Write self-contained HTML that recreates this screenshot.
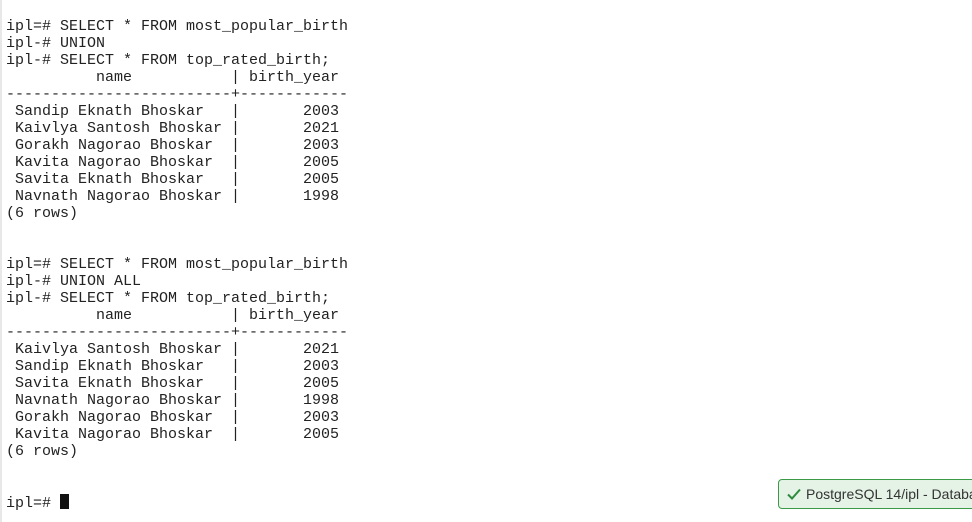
<!DOCTYPE html>
<html><head><style>
body{margin:0;width:972px;height:522px;background:#fff;position:relative;overflow:hidden}
pre{position:absolute;left:6px;top:18px;margin:0;font-family:"Liberation Mono",monospace;font-size:15px;line-height:17px;color:#222;letter-spacing:0}
.lb{position:absolute;left:0;top:0;width:2px;height:522px;background:#e8e8e8}
.cur{display:inline-block;width:9px;height:15px;background:#111;vertical-align:-2px}
.toast{position:absolute;left:778px;top:479px;width:210px;height:28px;background:#e5f3e7;border:1px solid #3a9a48;border-radius:4px;font-family:"Liberation Sans",sans-serif;font-size:14px;color:#333;line-height:28px;white-space:nowrap}
.toast svg{position:absolute;left:8px;top:8px}
.toast span{position:absolute;left:27px}
</style></head><body>
<div class="lb"></div>
<pre>ipl=# SELECT * FROM most_popular_birth
ipl-# UNION
ipl-# SELECT * FROM top_rated_birth;
          name           | birth_year
-------------------------+------------
 Sandip Eknath Bhoskar   |       2003
 Kaivlya Santosh Bhoskar |       2021
 Gorakh Nagorao Bhoskar  |       2003
 Kavita Nagorao Bhoskar  |       2005
 Savita Eknath Bhoskar   |       2005
 Navnath Nagorao Bhoskar |       1998
(6 rows)


ipl=# SELECT * FROM most_popular_birth
ipl-# UNION ALL
ipl-# SELECT * FROM top_rated_birth;
          name           | birth_year
-------------------------+------------
 Kaivlya Santosh Bhoskar |       2021
 Sandip Eknath Bhoskar   |       2003
 Savita Eknath Bhoskar   |       2005
 Navnath Nagorao Bhoskar |       1998
 Gorakh Nagorao Bhoskar  |       2003
 Kavita Nagorao Bhoskar  |       2005
(6 rows)


ipl=# <span class="cur"></span></pre>
<div class="toast"><svg width="14" height="12" viewBox="0 0 14 12"><path d="M1 6.5L5 10.5L13 1.5" stroke="#2e8b3e" stroke-width="2" fill="none"/></svg><span>PostgreSQL 14/ipl - Database</span></div>
</body></html>
